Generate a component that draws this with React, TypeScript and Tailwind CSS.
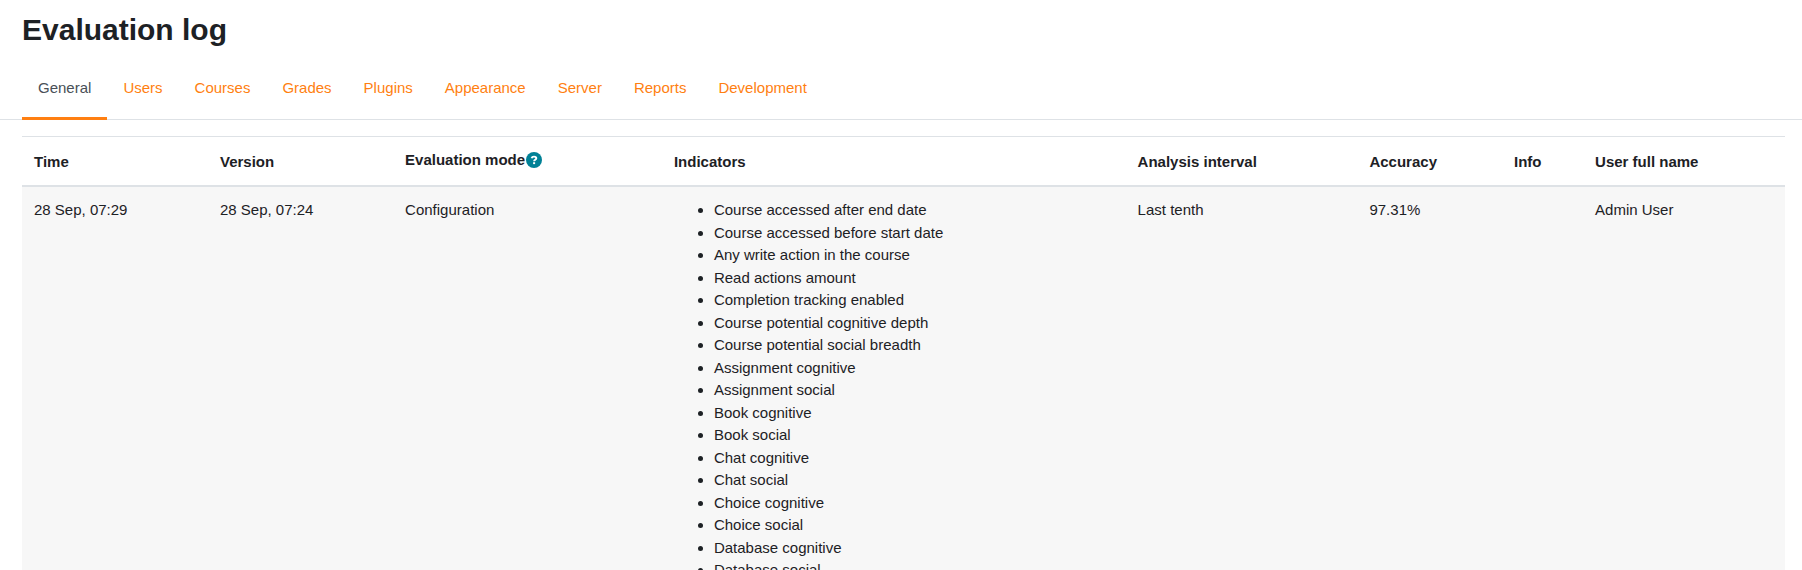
import { useState } from 'react';

const TABS = ['General', 'Users', 'Courses', 'Grades', 'Plugins', 'Appearance', 'Server', 'Reports', 'Development'];

const COLUMNS = [
  { label: 'Time', width: 'w-[10.55%]' },
  { label: 'Version', width: 'w-[10.5%]' },
  { label: 'Evaluation mode', width: 'w-[15.25%]', help: true },
  { label: 'Indicators', width: 'w-[26.3%]' },
  { label: 'Analysis interval', width: 'w-[13.15%]' },
  { label: 'Accuracy', width: 'w-[8.2%]' },
  { label: 'Info', width: 'w-[4.6%]' },
  { label: 'User full name', width: 'w-[11.45%]' },
];

const LOGS = [
  {
    time: '28 Sep, 07:29',
    version: '28 Sep, 07:24',
    mode: 'Configuration',
    indicators: [
      'Course accessed after end date',
      'Course accessed before start date',
      'Any write action in the course',
      'Read actions amount',
      'Completion tracking enabled',
      'Course potential cognitive depth',
      'Course potential social breadth',
      'Assignment cognitive',
      'Assignment social',
      'Book cognitive',
      'Book social',
      'Chat cognitive',
      'Chat social',
      'Choice cognitive',
      'Choice social',
      'Database cognitive',
      'Database social',
    ],
    interval: 'Last tenth',
    accuracy: '97.31%',
    info: '',
    user: 'Admin User',
  },
];

function HelpIcon() {
  return (
    <svg width="16" height="16" viewBox="0 0 16 16" fill="none" aria-hidden="true">
      <circle cx="8" cy="8" r="8" fill="#008196" />
      <path d="M5.6 6.2C5.9 5.1 6.8 4.6 8 4.6c1.400 0 2.300.7 2.300 1.700 0 1.400-2.200 1.400-2.200 2.900" stroke="#fff" strokeWidth="1.900" />
      <path d="M7.100 10.200h2v1.900h-2z" fill="#fff" />
    </svg>
  );
}

function Tabs() {
  const [active, setActive] = useState('General');

  return (
    <nav className="mt-3 flex border-b border-[#dee2e6] px-[22px]">
      {TABS.map(tab => (
        <a
          key={tab}
          href="#"
          onClick={e => { e.preventDefault(); setActive(tab); }}
          aria-current={tab === active ? 'page' : undefined}
          className={`-mb-px flex h-[60px] items-center border-b-[3px] px-4 ${tab === active ? 'border-[#ff7f11] text-[#495057]' : 'border-transparent text-[#ff7f11]'}`}
        >
          {tab}
        </a>
      ))}
    </nav>
  );
}

function LogTable() {
  return (
    <table className="w-full table-fixed border-separate border-spacing-0 text-left">
      <thead>
        <tr>
          {COLUMNS.map(col => (
            <th key={col.label} scope="col" className={`border-t border-b-2 border-[#dee2e6] p-3 align-bottom font-bold ${col.width}`}>
              {col.help ? (
                <div className="flex h-6 items-start gap-px whitespace-nowrap">
                  {col.label}
                  <button type="button" aria-label="Help with Evaluation mode" className="mt-[3px]">
                    <HelpIcon />
                  </button>
                </div>
              ) : col.label}
            </th>
          ))}
        </tr>
      </thead>
      <tbody>
        {LOGS.map(log => (
          <tr key={log.time} className="bg-[#f7f7f7] align-top">
            <td className="p-3">{log.time}</td>
            <td className="p-3">{log.version}</td>
            <td className="p-3">{log.mode}</td>
            <td className="p-3">
              <ul className="list-disc pl-10">
                {log.indicators.map(item => <li key={item}>{item}</li>)}
              </ul>
            </td>
            <td className="p-3">{log.interval}</td>
            <td className="p-3">{log.accuracy}</td>
            <td className="p-3">{log.info}</td>
            <td className="p-3">{log.user}</td>
          </tr>
        ))}
      </tbody>
    </table>
  );
}

export default function App() {
  return (
    <main className="bg-white pt-3 font-['Liberation_Sans',Arial,sans-serif] text-[15px] leading-normal text-[#1d2125]">
      <h1 className="px-[22px] text-[30px] leading-9 font-bold">Evaluation log</h1>
      <Tabs />
      <div className="mt-4 pr-[17px] pl-[22px]">
        <LogTable />
      </div>
    </main>
  );
}
